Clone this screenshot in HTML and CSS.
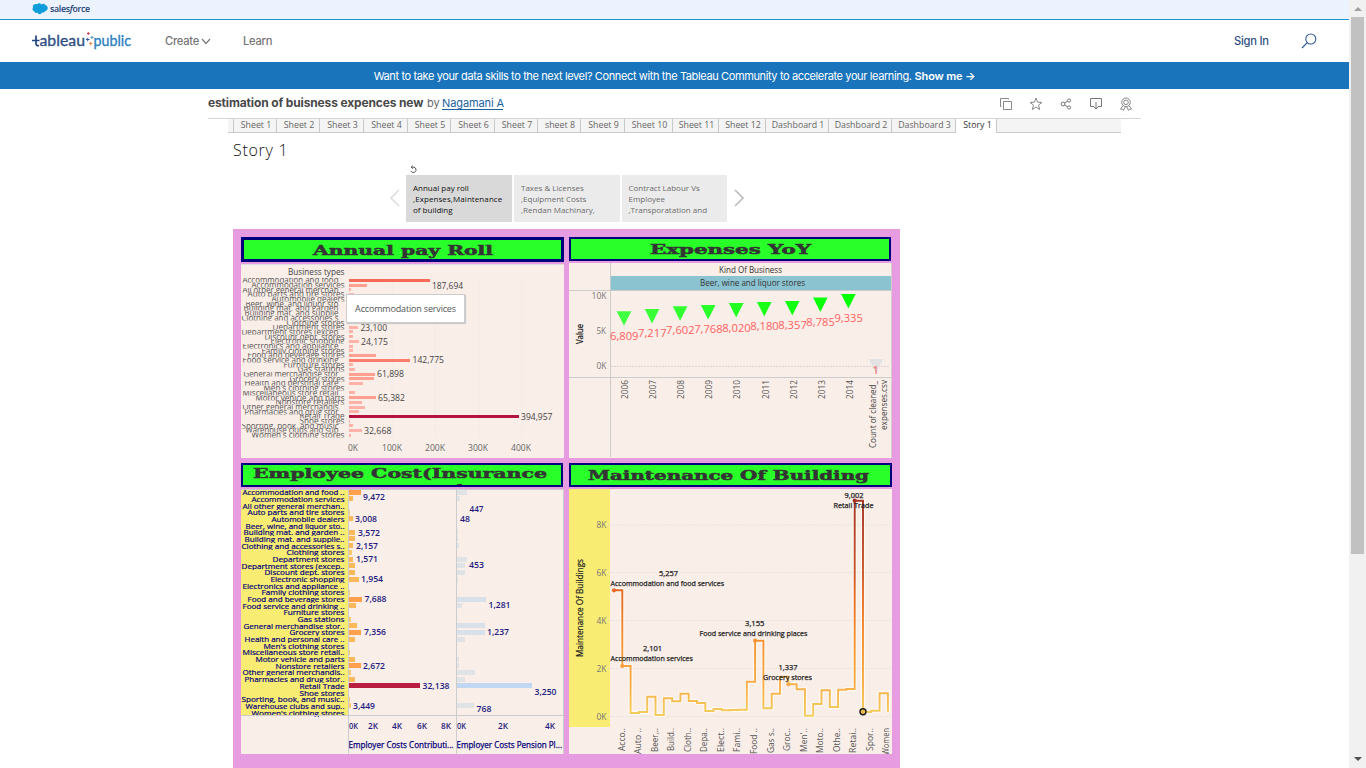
FILE: index.html
```html
<!DOCTYPE html>
<html lang="en">
<head>
<meta charset="utf-8">
<title>estimation of buisness expences new | Tableau Public</title>
<link rel="stylesheet" href="styles.css">
</head>
<body>
<main class="page">
  <div class="sf-bar">
    <svg class="sf-cloud" viewBox="0 0 16 12"><path d="M1 5C0 2 3 .5 5 1.2 6.500-.4 8.500.1 9.300 1.400 11 .2 13 .8 13.500 2.200 16.500 2.500 16.500 7.500 13.200 8 12.500 9.500 11 9.800 10 9.400 9 11.500 6.500 11.500 5.500 9.800 3.500 10.200 2.200 9.200 2 8 .3 7.500.1 6 1 5z" fill="#0d9dda"/></svg>
    <span class="sf-name">sales<i>f</i>orce</span>
  </div>
  <header class="top">
    <svg class="logo" viewBox="31 30 102 22">
      <g font-size="16">
        <path d="M36 35.500v8q0 2.500 3 2.200M32 40.500h7.500" fill="none" stroke="#1f457e" stroke-width="1.700"/>
        <text x="39.500" y="46.300" textLength="45.500" lengthAdjust="spacingAndGlyphs" fill="#2f5086" stroke="#2f5086" stroke-width=".35">ableau</text>
        <text x="93.500" y="46.300" textLength="37.500" lengthAdjust="spacingAndGlyphs" fill="#2b7fc0" stroke="#2b7fc0" stroke-width=".35">public</text>
      </g>
      <g fill="none" stroke-width="1">
        <path d="M86 39.500h3.500M87.700 37.800v3.500" stroke="#39549a"/><path d="M86.800 33.500h3M88.300 32v3" stroke="#d33a55"/>
        <path d="M90.500 37.500h3M92 36v3" stroke="#5a9ab5"/><path d="M89 43.500h3.500M90.700 41.800v3.500" stroke="#ee8a45"/>
      </g>
    </svg>
    <nav class="nav">
      <a class="create">Create</a><svg class="chev" viewBox="0 0 10 8"><path d="M1 2l4 4.500L9 2" fill="none" stroke="#777" stroke-width="1.200"/></svg>
      <a class="learn">Learn</a>
    </nav>
    <a class="signin">Sign In</a>
    <svg class="search" viewBox="0 0 16 16"><circle cx="9.800" cy="6" r="5" fill="none" stroke="#2f5b98" stroke-width="1.100"/><path d="M6.300 9.700L1 15" stroke="#2f5b98" stroke-width="1.200"/></svg>
  </header>
  <div class="banner"><span>Want to take your data skills to the next level? Connect with the Tableau Community to accelerate your learning.</span> <b>Show me →</b></div>
  <section class="title-row">
    <h1>estimation of buisness expences new</h1><span class="by">by</span><a class="author">Nagamani A</a>
    <div class="actions">
      <svg viewBox="0 0 14 14"><path d="M4.500 4.500h8v8h-8zM2.500 9.500h-1v-8h8v1" fill="none" stroke="#888"/></svg>
      <svg viewBox="0 0 14 14"><path d="M7 1l1.600 4.200 4.400.2-3.500 2.700 1.200 4.400L7 10l-3.700 2.500 1.200-4.400L1 5.400l4.400-.2z" fill="none" stroke="#888"/></svg>
      <svg viewBox="0 0 14 14"><g fill="none" stroke="#777"><circle cx="4" cy="7" r="1.900"/><circle cx="10" cy="3.500" r="1.600"/><circle cx="10" cy="10.500" r="1.600"/><path d="M5.600 6l3-1.800M5.600 8l3 1.800"/></g></svg>
      <svg viewBox="0 0 14 14"><path d="M5 9.500H1.500v-8h11v8H9M7 5v7M5 10l2 2 2-2" fill="none" stroke="#777"/></svg>
      <svg viewBox="0 0 14 14"><g fill="none" stroke="#888"><circle cx="7" cy="5.300" r="4.300"/><circle cx="7" cy="5.300" r="2.300"/><path d="M4 8.500l-2.500 3.700 2-.1.900 1.300L6.500 9.600M10 8.500l2.500 3.700-2-.1-.9 1.300-2.100-3.800"/></g></svg>
    </div>
  </section>
  <div class="tabs" id="tabs"></div>
  <section class="story">
    <h2>Story 1</h2>
    <div class="nav-reset"><svg viewBox="0 0 9 9"><path d="M2.300 2.200H5a2.700 2.700 0 1 1-3.200 3.600M3.800.6L2.200 2.200l1.600 1.600" fill="none" stroke="#444" stroke-width=".9"/></svg></div>
    <div class="points">
      <svg class="arrow" viewBox="0 0 12 18"><path d="M10 1L2 9l8 8" fill="none" stroke="#ddd" stroke-width="1.600"/></svg>
      <div class="point on">Annual pay roll<br><em>,Expenses,Maintenance</em><br>of building</div>
      <div class="point">Taxes &amp; Licenses<br>,Equipment Costs<br>,Rendan Machinary,</div>
      <div class="point">Contract Labour Vs<br>Employee<br>,Transporatation and</div>
      <svg class="arrow next" viewBox="0 0 12 18"><path d="M2 1l8 8-8 8" fill="none" stroke="#bbb" stroke-width="1.600"/></svg>
    </div>
    <div class="dash">
      <div class="col">
        <svg class="head h1a" viewBox="241 237 323 25" id="hd1"></svg>
        <svg class="panel p1" viewBox="241 264 323 194" id="payroll"></svg>
        <svg class="head h2a" viewBox="241 463 322 24" id="hd3"></svg>
        <svg class="panel p2" viewBox="241 489 323 265" id="employee"></svg>
      </div>
      <div class="col">
        <svg class="head h1b" viewBox="569 237 322 24" id="hd2"></svg>
        <svg class="panel p3" viewBox="569 263 323 195" id="expenses"></svg>
        <svg class="head h2b" viewBox="569 463 323 24" id="hd4"></svg>
        <svg class="panel p2" viewBox="569 489 323 265" id="maintenance"></svg>
      </div>
      <div class="tooltip">Accommodation services</div>
    </div>
  </section>
</main>
<aside class="scroll"><i class="up"></i><div class="thumb"></div><i class="down"></i></aside>
<script src="charts.js"></script>
</body>
</html>
```

FILE: styles.css
```css
* { box-sizing: border-box; }
body { margin: 0; width: 1366px; height: 768px; overflow: hidden; display: flex; background: #fff; font-family: "Open Sans", "Noto Sans", sans-serif; }
svg { display: block; flex: none; }
.page { width: 1349px; height: 768px; overflow: hidden; flex: none; }
.sf-bar { height: 20px; background: #ecf3fe; border-bottom: 1px solid #1b96d3; display: flex; align-items: center; padding-left: 32px; }
.sf-cloud { width: 16px; height: 12px; margin-top: -1px; }
.sf-name { font: 600 8.800px/16px "Open Sans", sans-serif; color: #1c3f75; margin-left: 2px; letter-spacing: -.3px; margin-top: -2px; }
.top { height: 42px; display: flex; align-items: center; padding-left: 31px; font-size: 11px; }
.logo { width: 102px; height: 22px; }
.nav { display: flex; align-items: center; color: #757575; margin-left: 32px; width: 1069px; font: 500 11.200px Inter, sans-serif; letter-spacing: -.25px; }
.create { width: 36px; }
.chev { width: 10px; height: 8px; }
.learn { margin-left: 32px; }
.signin { color: #2f4f84; width: 67px; font: 500 11.200px Inter, sans-serif; letter-spacing: -.25px; }
.search { width: 16px; height: 16px; }
.banner { height: 27px; background: #1a74bb; color: #fff; display: flex; justify-content: center; gap: 3px; align-items: center; font: 11px Inter, sans-serif; letter-spacing: -.38px; }
.banner b { font-weight: 600; letter-spacing: -.15px; }
.title-row { height: 30px; width: 933px; margin-left: 208px; border-bottom: 1px solid #d4d4d4; display: flex; align-items: center; color: #666; white-space: nowrap; }
.title-row h1 { margin: -2px 0 0; width: 219px; font: 700 12px Inter, sans-serif; color: #484848; letter-spacing: -.14px; }
.by { width: 15px; margin-top: -2px; font: 11px Inter, sans-serif; }
.author { color: #1a629f; border-bottom: 1px solid #1a629f; width: 61px; font: 11px/11px Inter, sans-serif; letter-spacing: -.1px; }
.actions { display: flex; gap: 16px; margin-left: auto; padding-right: 8px; }
.actions svg { width: 14px; height: 14px; }
.tabs { margin-left: 228px; width: 893px; height: 14px; display: flex; background: #f4f4f4; font: 8.800px/13px "Open Sans", sans-serif; color: #666; }
.tab { border-right: 1px solid #c8c8c8; border-bottom: 1px solid #c8c8c8; text-align: center; white-space: nowrap; flex: none; padding-left: 2px; }
.tab.on { background: #fff; border-bottom-color: #fff; color: #333; padding-left: 3px; }
.tab.rest { flex: 1; border-right: 0; }
.story { margin-left: 233px; width: 667px; }
.story h2 { margin: 0; height: 32px; font: 300 16px/35px "Open Sans", sans-serif; letter-spacing: .7px; color: #111; }
.nav-reset { height: 10px; padding-left: 176px; }
.nav-reset svg { width: 9px; height: 9px; }
.points { height: 54px; display: flex; align-items: flex-start; gap: 2px; padding-left: 156px; }
.arrow { width: 12px; height: 18px; margin-top: 14px; margin-right: 3px; }
.arrow.next { margin-left: 4px; }
.point { width: 106px; height: 47px; background: #ebebeb; color: #6c6c6c; padding: 7px 0 0 7px; font: 8px/11px "Open Sans", sans-serif; white-space: nowrap; }
.point + .point { width: 105.500px; }
.point.on { background: #d9d9d9; color: #111; }
.point em { font-style: normal; letter-spacing: .08px; }
.dash { position: relative; height: 540px; background: #e79be1; padding: 8px; display: grid; grid-template-columns: 323px 323px; column-gap: 5px; }
.head { background: #29ff29; margin-bottom: 2px; }
.panel { background: #f9eee8; margin-bottom: 5px; }
.h1a { width: 323px; height: 25px; }
.h1b { width: 322px; height: 24px; }
.h2a { width: 322px; height: 24px; }
.h2b { width: 323px; height: 24px; }
.p1 { width: 323px; height: 194px; }
.p3 { width: 323px; height: 195px; }
.p2 { width: 323px; height: 265px; }
.tooltip { position: absolute; left: 113px; top: 65px; width: 119px; height: 29px; background: #fff; border: 1px solid #ccc; box-shadow: 1px 1px 1px #ccc; color: #555; text-align: center; font: 9px/28px "Open Sans", sans-serif; letter-spacing: -.17px; white-space: nowrap; }
.scroll { width: 17px; background: #f1f1f1; display: flex; flex-direction: column; align-items: center; height: 768px; padding: 7px 0; }
.up, .down { border: 4px solid transparent; border-top-width: 0; border-bottom-color: #a0a0a0; height: 4px; }
.down { border-top: 4px solid #505050; border-bottom-width: 0; margin-top: auto; }
.thumb { width: 13px; height: 537px; background: #c1c1c1; margin-top: 6px; }
svg text { font-family: "Open Sans", "Noto Sans", sans-serif; }
svg text.heading { font-family: "DejaVu Serif", serif; font-weight: 700; fill: #333; }
.logo text { font-family: Lato, sans-serif; }
```

FILE: charts.js
```js
const NS = "http://www.w3.org/2000/svg";
const $ = id => document.getElementById(id);
function el(parent, name, attrs, text) {
  const e = document.createElementNS(NS, name);
  for (const k in attrs) e.setAttribute(k, attrs[k]);
  if (text !== undefined) e.textContent = text;
  parent.appendChild(e);
  return e;
}
// Label with its left edge at x, centred on y and fitted to width w.
function label(p, s, x, y, w, size, fill, extra) {
  return el(p, "text", Object.assign({ x, y: y + size * 0.36, textLength: w, lengthAdjust: "spacingAndGlyphs", "font-size": size, fill }, extra || {}), s);
}
function vlabel(p, s, cx, bottom, w, size, fill, extra) {
  return label(p, s, 0, 0, w, size, fill, Object.assign({ transform: `translate(${cx} ${bottom}) rotate(-90)` }, extra || {}));
}
const line = (p, x1, y1, x2, y2, stroke, extra) => el(p, "line", Object.assign({ x1, y1, x2, y2, stroke }, extra || {}));
const rect = (p, x, y, width, height, fill) => el(p, "rect", { x, y, width, height, fill });

const edges = [233, 276, 319, 363, 407, 450, 494, 537, 580, 624, 672, 718, 765, 828, 891, 955, 996];
const names = ["Sheet 1", "Sheet 2", "Sheet 3", "Sheet 4", "Sheet 5", "Sheet 6", "Sheet 7", "sheet 8", "Sheet 9", "Sheet 10", "Sheet 11", "Sheet 12", "Dashboard 1", "Dashboard 2", "Dashboard 3", "Story 1"];
const addTab = (cls, w, s) => {
  const d = document.createElement("div");
  d.className = "tab " + cls;
  if (w) d.style.width = w + "px";
  d.textContent = s;
  $("tabs").appendChild(d);
};
addTab("", 6, "");
names.forEach((n, i) => addTab(i === 15 ? "on" : "", edges[i + 1] - edges[i], n));
addTab("rest", 0, "");

function heading(id, x, y, w, h, b, s, tx, tw, base) {
  const p = $(id);
  el(p, "rect", { x: x + b / 2, y: y + b / 2, width: w - b, height: h - b, fill: "#29ff29", stroke: "#00007c", "stroke-width": b });
  el(p, "text", { class: "heading", x: tx, y: base, textLength: tw, lengthAdjust: "spacingAndGlyphs", "font-size": 12.6, stroke: "#333", "stroke-width": 0.5 }, s);
}
heading("hd1", 241, 237, 323, 25, 3, "Annual pay Roll", 313, 180, 254.6);
heading("hd2", 569, 237, 322, 24, 2, "Expenses YoY", 650, 161, 253.6);
heading("hd3", 241, 463, 322, 24, 2, "Employee Cost(Insurance", 253, 294, 477.5);
rect($("hd3"), 457, 484, 5, 1.2, "#333");
heading("hd4", 569, 463, 323, 24, 2, "Maintenance Of Building", 588, 281, 479.6);

// name, label width, payroll bar, cost bar, pension bar
const rows = [
  ["Accommodation and food ..", 102, 81, 12, 10], ["Accommodation services", 93, 18, 4, 3], ["All other general merchan..", 102, 2, 0, 0],
  ["Auto parts and tire stores", 97, 5, 1, 0], ["Automobile dealers", 73, 9, 4, 0], ["Beer, wine, and liquor sto..", 99, 3, 0, 0],
  ["Building mat. and garden ..", 101, 8, 6, 1], ["Building mat. and supplie..", 100, 7, 6, 1], ["Clothing and accessories s..", 103, 8, 4, 2],
  ["Clothing stores", 58, 6, 3, 0], ["Department stores", 72, 9, 4, 10], ["Department stores (excep..", 103, 4, 6, 8],
  ["Discount dept. stores", 80, 4, 6, 8], ["Electronic shopping", 74, 10, 10, 1], ["Electronics and appliance ..", 102, 4, 0, 0],
  ["Family clothing stores", 83, 4, 1, 0], ["Food and beverage stores", 97, 27, 13, 29], ["Food service and drinking ..", 102, 61, 7, 5],
  ["Furniture stores", 61, 4, 0, 0], ["Gas stations", 47, 6, 2, 0], ["General merchandise stor..", 101, 26, 8, 28],
  ["Grocery stores", 55, 25, 12, 28], ["Health and personal care ..", 100, 14, 6, 8], ["Men's clothing stores", 81, 0, 0, 0],
  ["Miscellaneous store retail..", 102, 6, 1, 0], ["Motor vehicle and parts", 89, 27, 6, 2], ["Nonstore retailers", 69, 13, 12, 2],
  ["Other general merchandis..", 102, 16, 2, 18], ["Pharmacies and drug stor..", 100, 10, 6, 8], ["Retail Trade", 45, 170, 71, 75],
  ["Shoe stores", 45, 1, 0, 0], ["Sporting, book, and  music..", 103, 4, 1, 0], ["Warehouse clubs and sup..", 99, 13, 2, 17],
  ["Women's clothing stores", 93, 2, 0, 0]
];

const pay = $("payroll");
rect(pay, 241, 264, 323, 1, "#ddd");
label(pay, "Business types", 288, 272, 56.5, 8.5, "#444");
for (let i = 0; i < 5; i++) line(pay, 349 + i * 43.2, 278, 349 + i * 43.2, 438, "#f1ebe8");
rows.forEach((r, i) => {
  const y = 280.4 + i * 4.69;
  const s = el(pay, "svg", { x: 241, y: Math.round(y - 2.1), width: 104, height: 4.5 });
  const dots = r[0].endsWith("..");
  label(s, dots ? r[0].slice(0, -2).trim() : r[0], 103.5 - r[1], 2.2, dots ? r[1] - 6 : r[1], 8.2, "#555");
  const fill = i === 29 ? "#b3153f" : i === 0 ? "#f76a58" : i === 17 ? "#ff7d6d" : r[2] > 17 ? "#ff9f90" : "#ffb3a8";
  if (r[2]) rect(pay, 349, Math.round(y - 1.5), r[2], 3, fill);
});
[["187,694", 432, 286, 31], ["23,100", 360.5, 328, 26.5], ["24,175", 361, 342, 27], ["142,775", 412.5, 360, 31.5], ["61,898", 377, 374, 27], ["65,382", 378, 398, 27], ["394,957", 521, 416.5, 31.5], ["32,668", 364, 430.5, 27.5]]
  .forEach(v => label(pay, v[0], v[1], v[2], v[3], 8.5, "#444"));
[["0K", 348, 10], ["100K", 382, 20], ["200K", 425, 20], ["300K", 468, 20], ["400K", 511, 20]].forEach(v => label(pay, v[0], v[1], 448, v[2], 8.5, "#666"));

const emp = $("employee");
const navy = "#000078";
rect(emp, 241, 489, 107, 227, "#f9ec72");
rows.forEach((r, i) => {
  const y = 492.8 + i * 6.67;
  const s = el(emp, "svg", { x: 241, y: Math.round(y - 3.4), width: 104, height: 7 });
  label(s, r[0], 103.5 - r[1], 3.4, r[1], 7.8, navy, { stroke: navy, "stroke-width": 0.2 });
  const cost = i === 29 ? "#b91d40" : r[3] > 11 ? "#ffa04f" : r[3] > 3 ? "#fcb95b" : "#f8cb70";
  if (r[3]) rect(emp, 349, Math.round(y - 3), r[3], 5, cost);
  if (r[4]) rect(emp, 457, Math.round(y - 3), r[4], 5, i === 29 ? "#c2d7f2" : r[4] > 20 ? "#d8e0ea" : "#e0e3e6");
});
[["9,472", 363, 497, 22], ["3,008", 355, 519, 22], ["3,572", 358, 532.5, 22], ["2,157", 356, 546, 22], ["1,571", 356, 559, 22], ["1,954", 361, 579, 22], ["7,688", 364.5, 599, 22], ["7,356", 364, 632, 22], ["2,672", 363, 665.5, 22], ["32,138", 422.5, 685.5, 27], ["3,449", 353, 705.5, 22],
 ["447", 469.5, 508.5, 14], ["48", 460, 518.5, 10], ["453", 469, 565, 15], ["1,281", 488.5, 605, 22], ["1,237", 487, 632, 22], ["3,250", 534.5, 691.5, 22], ["768", 476.5, 708.5, 15],
 ["0K", 349, 726, 9], ["2K", 368, 726, 10], ["4K", 392, 726, 10], ["6K", 417, 726, 10], ["8K", 441, 726, 10], ["0K", 457, 726, 9], ["2K", 498, 726, 10], ["4K", 545, 726, 10]]
  .forEach(v => label(emp, v[0], v[1], v[2], v[3], 8.5, "#241c80", { "font-weight": 600 }));
label(emp, "Employer Costs Contributi...", 348.5, 745, 105, 8.3, navy, { stroke: navy, "stroke-width": 0.25 });
label(emp, "Employer Costs Pension Pl...", 456.5, 745, 105.5, 8.3, navy, { stroke: navy, "stroke-width": 0.25 });
line(emp, 241, 489.5, 564, 489.5, "#ccc");
line(emp, 241, 715.5, 564, 715.5, "#ccc");
[348.5, 456.5, 563.5].forEach(x => line(emp, x, 489, x, 754, "#ccc"));

const exp = $("expenses");
rect(exp, 611, 276, 280, 14, "#8bc3d1");
label(exp, "Kind Of Business", 719, 270, 63, 8.5, "#333");
label(exp, "Beer, wine and liquor stores", 700, 283, 105, 8.5, "#333");
line(exp, 569, 290.5, 892, 290.5, "#ccc");
line(exp, 569, 377.5, 892, 377.5, "#ccc");
line(exp, 610.5, 263, 610.5, 457, "#ccc");
line(exp, 891.5, 263, 891.5, 458, "#d4cfcc");
line(exp, 611, 366.5, 890, 366.5, "#ddd4cf", { "stroke-dasharray": "2 1" });
[["10K", 591.5, 296, 15], ["5K", 596.5, 331, 9.5], ["0K", 596.5, 366, 10]].forEach(v => label(exp, v[0], v[1], v[2], v[3], 8.5, "#777"));
vlabel(exp, "Value", 580, 344, 20, 8.2, "#111", { stroke: "#111", "stroke-width": 0.2 });
const tops = [311.3, 309, 306.3, 305, 303, 302, 301, 297.5, 294];
const vals = ["6,809", "7,217", "7,602", "7,768", "8,020", "8,180", "8,357", "8,785", "9,335"];
const ty = [336, 333.5, 330.5, 329, 328, 326.5, 325.5, 322.5, 318.5];
tops.forEach((t, i) => {
  const x = 624 + i * 28.05;
  el(exp, "path", { d: `M${x - 7.3} ${t}h14.6l-7.3 14.5z`, fill: `rgb(${64 - i * 8},255,${64 - i * 8})` });
  label(exp, vals[i], x - 14, ty[i], 28.5, 11, "#ff6060");
  vlabel(exp, String(2006 + i), 625 + i * 28.1, 399, 19, 8.5, "#555");
});
el(exp, "path", { d: "M868.7 359h14.6l-7.3 14z", fill: "#e3e3e3" });
el(exp, "text", { x: 872.6, y: 374, "font-size": 11, fill: "#ef7f7f", "font-weight": 600 }, "1");
vlabel(exp, "Count of cleaned_", 872.5, 448, 67, 8.5, "#444");
vlabel(exp, "expenses.csv", 884, 430, 50, 8.5, "#444");

const mt = $("maintenance");
rect(mt, 569, 489, 41, 238, "#f9ec72");
[["8K", 525], ["6K", 572.5], ["4K", 620.5], ["2K", 668.5], ["0K", 716.5]].forEach(v => {
  label(mt, v[0], 596.5, v[1], 10, 8.5, "#777");
  line(mt, 607, v[1], 892, v[1], "#eae3e0", { "stroke-dasharray": "2 1" });
});
vlabel(mt, "Maintenance Of Buildings", 580.5, 657, 98, 8.2, "#222", { stroke: "#222", "stroke-width": 0.2 });
const g = el(mt, "linearGradient", { id: "heat", gradientUnits: "userSpaceOnUse", x1: 0, x2: 0, y1: 500, y2: 716 });
[[0, "#a33427"], [.35, "#c95a2a"], [.43, "#e36a28"], [.65, "#f59133"], [.85, "#f8ac49"], [1, "#f3cd5d"]].forEach(s => el(g, "stop", { offset: s[0], "stop-color": s[1] }));
const ys = [316, 543, 684, 681, 635, 690, 640, 649, 626, 648, 654, 678, 672, 676, 675, 674, 590, 467, 670, 626, 575, 598, 613, 692, 657, 616, 666, 614, 612, 47, 681, 677, 625, 681];
const px = i => +(614 + i * 8.3).toFixed(1);
const py = i => +(485 + ys[i] / 3).toFixed(1);
let d = `M${px(0)} ${py(0)}`;
for (let i = 1; i < ys.length; i++) d += `H${px(i)}V${py(i)}`;
el(mt, "path", { d, fill: "none", stroke: "#fffaf2", "stroke-width": 4 });
el(mt, "path", { d, fill: "none", stroke: "url(#heat)", "stroke-width": 1.9 });
[[0, "#ec6725"], [1, "#f99a3a"], [17, "#f79435"], [21, "#f9ad4d"], [29, "#a33427"]].forEach(v => el(mt, "circle", { cx: px(v[0]), cy: py(v[0]), r: 2.1, fill: v[1] }));
el(mt, "circle", { cx: px(30), cy: py(30) - .2, r: 3, fill: "#e8bd4d", stroke: "#1a1a1a", "stroke-width": 1.4 });
[["9,002", 844.5, 495.5, 19], ["Retail Trade", 833.5, 505.5, 40], ["5,257", 659, 573, 19], ["Accommodation and food services", 610.5, 583, 113.5], ["3,155", 745, 623, 19.5], ["Food service and drinking places", 699.5, 633, 108], ["2,101", 643, 648.5, 19], ["Accommodation services", 610.5, 658.5, 82.5], ["1,337", 778.5, 667, 19], ["Grocery stores", 763, 677.5, 49]]
  .forEach(v => label(mt, v[0], v[1], v[2], v[3], 7.6, "#222", { stroke: "#222", "stroke-width": 0.25 }));
[["Acco..", 23], ["Auto ..", 26], ["Beer,..", 24], ["Build..", 23], ["Cloth..", 24], ["Depa..", 24], ["Elect..", 24], ["Fami..", 24], ["Food ..", 26], ["Gas s..", 25], ["Groc..", 23], ["Men'..", 24], ["Moto..", 25], ["Othe..", 24], ["Retai..", 25], ["Spor..", 23], ["Women", 27]]
  .forEach((v, i) => vlabel(mt, v[0], 621.5 + i * 16.55, 728 + v[1], v[1], 8.5, "#555"));
```
